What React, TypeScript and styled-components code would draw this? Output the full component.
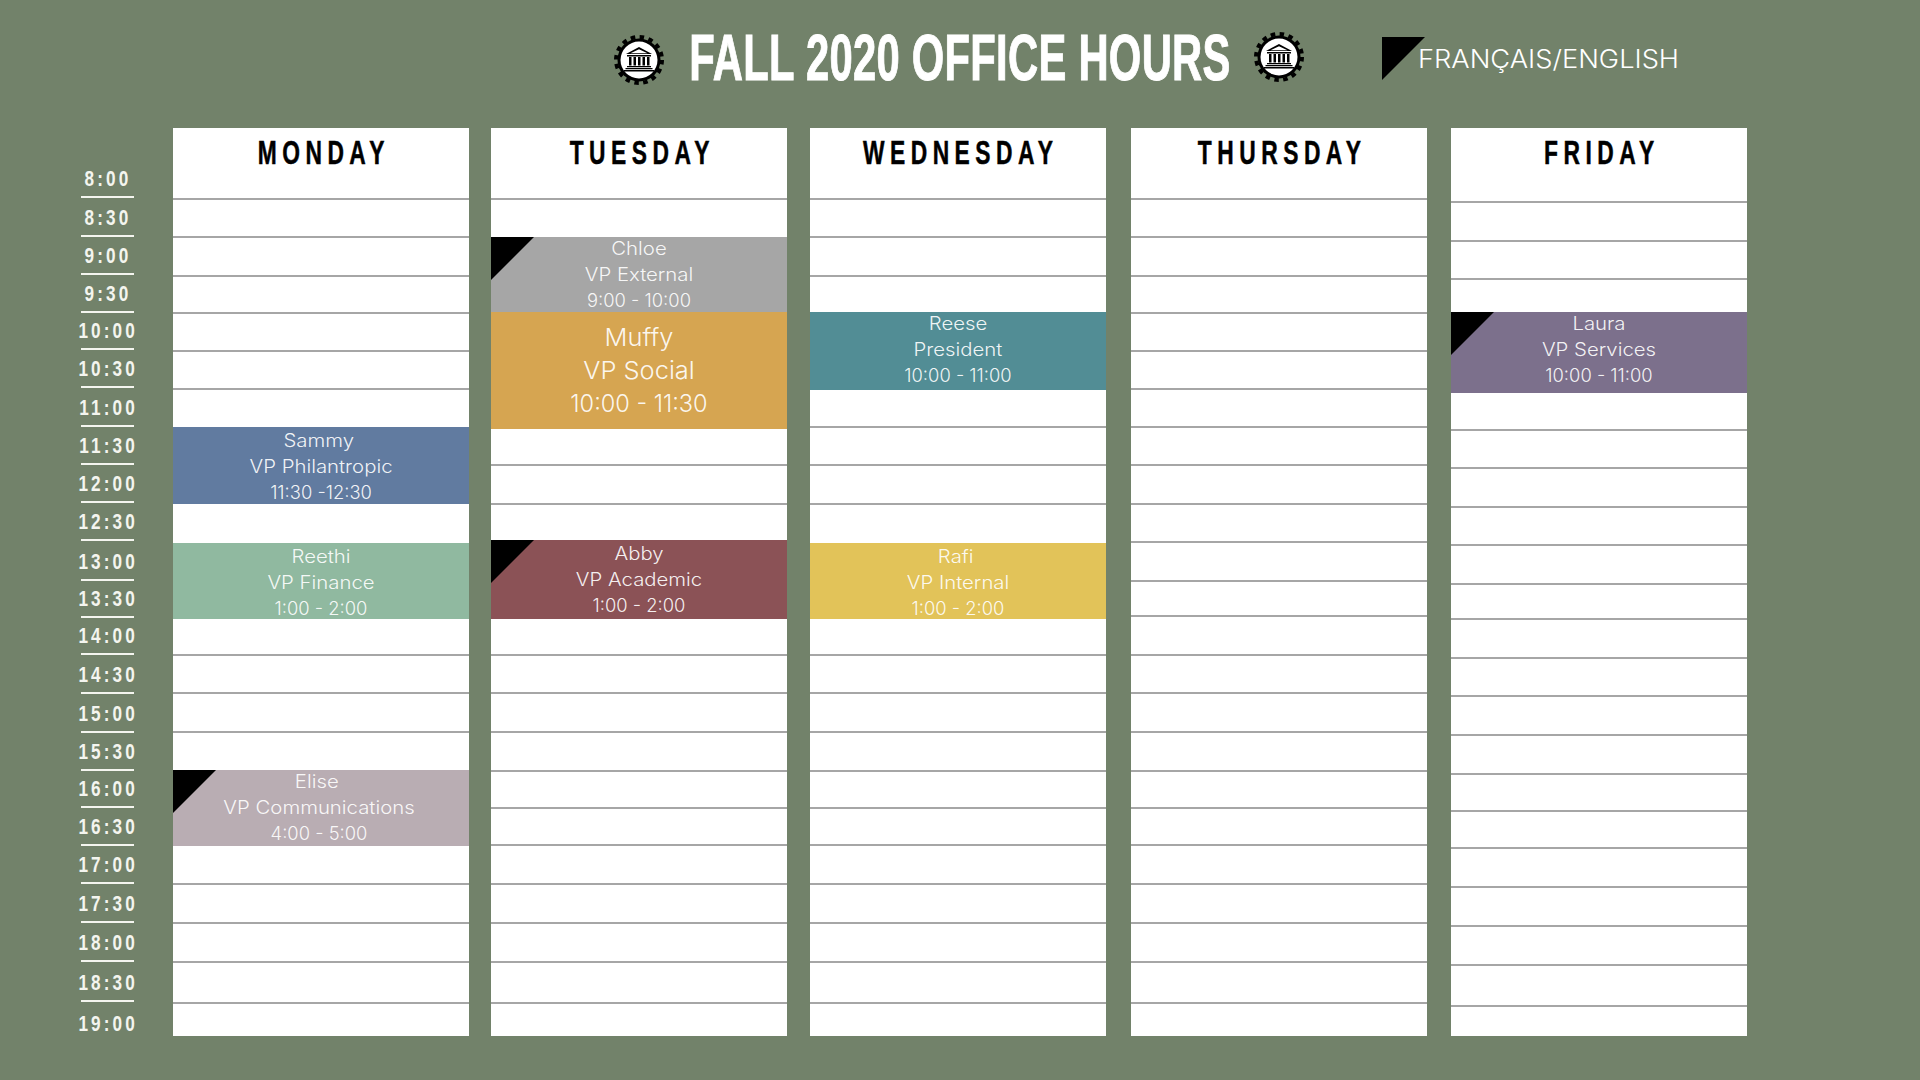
import React from 'react';
import styled, { createGlobalStyle } from 'styled-components';

interface Booking {
  to: number;
  name?: string;
  role?: string;
  time?: string;
  color?: string;
  flag?: boolean;
  big?: boolean;
  dx?: number;
  dy?: number;
  nameDx?: number;
}

type Row = number | Booking;

const GRID_TOP = 128;
const GRID_BOTTOM = 1036;

const afternoon = [656, 694, 733, 772, 809, 846, 885, 924, 963, 1004];

const days: { title: string; gap: number; rows: Row[] }[] = [
  {
    title: 'MONDAY',
    gap: 0,
    rows: [
      200, 238, 277, 314, 352, 390,
      { to: 427 },
      { to: 504, name: 'Sammy', role: 'VP Philantropic', time: '11:30 -12:30', color: '#617ba0', nameDx: -2 },
      { to: 543 },
      { to: 619, name: 'Reethi', role: 'VP Finance', time: '1:00 - 2:00', color: '#90b9a0' },
      656, 694, 733,
      { to: 770 },
      { to: 846, name: 'Elise', role: 'VP Communications', time: '4:00 - 5:00', color: '#b9adb3', flag: true, dx: -2, dy: -2, nameDx: -2 },
      885, 924, 963, 1004,
    ],
  },
  {
    title: 'TUESDAY',
    gap: 22,
    rows: [
      200,
      { to: 237 },
      { to: 312, name: 'Chloe', role: 'VP External', time: '9:00 - 10:00', color: '#a6a6a6', flag: true, dy: -2 },
      { to: 429, name: 'Muffy', role: 'VP Social', time: '10:00 - 11:30', color: '#d6a551', big: true },
      466, 505,
      { to: 540 },
      { to: 619, name: 'Abby', role: 'VP Academic', time: '1:00 - 2:00', color: '#8b5256', flag: true },
      ...afternoon,
    ],
  },
  {
    title: 'WEDNESDAY',
    gap: 23,
    rows: [
      200, 238, 277,
      { to: 312 },
      { to: 390, name: 'Reese', role: 'President', time: '10:00 - 11:00', color: '#528d95', dy: -2 },
      428, 466, 505,
      { to: 543 },
      { to: 619, name: 'Rafi', role: 'VP Internal', time: '1:00 - 2:00', color: '#e2c359', nameDx: -2 },
      ...afternoon,
    ],
  },
  {
    title: 'THURSDAY',
    gap: 25,
    rows: [200, 238, 277, 314, 352, 390, 428, 466, 505, 543, 582, 617, ...afternoon],
  },
  {
    title: 'FRIDAY',
    gap: 24,
    rows: [
      203, 242, 280,
      { to: 312 },
      { to: 393, name: 'Laura', role: 'VP Services', time: '10:00 - 11:00', color: '#7c708c', flag: true, dy: -2 },
      431, 469, 508, 546, 585, 620, 659, 697, 736, 775, 812, 849, 888, 927, 966, 1007,
    ],
  },
];

const hours: [string, number][] = [
  ['8:00', 198], ['8:30', 237], ['9:00', 275], ['9:30', 313], ['10:00', 350], ['10:30', 388],
  ['11:00', 427], ['11:30', 465], ['12:00', 503], ['12:30', 541], ['13:00', 581], ['13:30', 618],
  ['14:00', 655], ['14:30', 694], ['15:00', 733], ['15:30', 771], ['16:00', 808], ['16:30', 846],
  ['17:00', 884], ['17:30', 923], ['18:00', 962], ['18:30', 1002], ['19:00', 1038],
];

const GearLogo = ({ top }: { top: number }) => (
  <LogoSvg $top={top} width={50} height={50} viewBox="0 0 100 100">
    <circle cx="50" cy="50" r="43" fill="#000" />
    <circle cx="50" cy="50" r="46" fill="none" stroke="#000" strokeWidth="8" strokeDasharray="9 9.06" />
    <circle cx="50" cy="50" r="37" fill="#fff" />
    <path d="M50 24 L76 38 H24 Z M50 28.5 L67 36.5 H33 Z" fill="#000" fillRule="evenodd" />
    <rect x="26" y="40" width="48" height="3" fill="#000" />
    <path d="M30 44h5v17h-5z M39 44h5v17h-5z M48 44h5v17h-5z M57 44h5v17h-5z M66 44h5v17h-5z" fill="#000" />
    <rect x="26" y="62" width="48" height="2.5" fill="#000" />
    <rect x="23" y="66" width="54" height="2.5" fill="#000" />
    <rect x="20" y="70" width="60" height="3" fill="#000" />
  </LogoSvg>
);

const App = () => (
  <>
    <GlobalStyle />
    <Page>
      <Header>
        <GearLogo top={2} />
        <Title>
          <Scaled $k={0.643}>FALL 2020 OFFICE HOURS</Scaled>
        </Title>
        <GearLogo top={-1} />
        <Language>
          <Flag />
          <LanguageText>FRANÇAIS/ENGLISH</LanguageText>
        </Language>
      </Header>

      <Main>
        <Hours>
          {hours.map(([label, y], i) => (
            <HourRow key={label} $h={y - (i === 0 ? 160 : hours[i - 1][1])} $last={i === hours.length - 1}>
              <Scaled $k={0.78}>{label}</Scaled>
            </HourRow>
          ))}
        </Hours>

        {days.map(day => {
          let prev = day.rows[0] as number;
          return (
            <Day key={day.title} $gap={day.gap}>
              <DayHead $h={prev - GRID_TOP}>
                <Scaled $k={0.69}>{day.title}</Scaled>
              </DayHead>
              {day.rows.slice(1).map((row, i) => {
                const to = typeof row === 'number' ? row : row.to;
                const h = to - prev;
                prev = to;
                if (typeof row === 'number') return <Slot key={i} $h={h} $ruled />;
                if (!row.name) return <Slot key={i} $h={h} />;
                const wordK = row.big ? 1.06 : 1.13;
                return (
                  <Event key={i} $h={h} $color={row.color || '#fff'} $big={row.big} $dx={row.dx || 0} $dy={row.dy || 0}>
                    {row.flag && <Flag $over />}
                    <EventLine $k={wordK} $dx={row.nameDx || 0}>{row.name}</EventLine>
                    <EventLine $k={wordK}>{row.role}</EventLine>
                    <EventLine $k={row.big ? 0.98 : 1.02}>{row.time}</EventLine>
                  </Event>
                );
              })}
              <Slot $h={GRID_BOTTOM - prev} />
            </Day>
          );
        })}
      </Main>
    </Page>
  </>
);

const GlobalStyle = createGlobalStyle`
  html, body {
    margin: 0;
    padding: 0;
    background: #72826a;
  }
  * {
    box-sizing: border-box;
  }
`;

const Page = styled.div`
  width: 1920px;
  height: 1080px;
  overflow: hidden;
  background: #72826a;
  font-family: 'Inter', 'Liberation Sans', sans-serif;
`;

const Header = styled.header`
  height: 128px;
  padding: 33px 0 0 614px;
  display: flex;
  align-items: flex-start;
`;

const LogoSvg = styled.svg<{ $top: number }>`
  flex: none;
  display: block;
  margin-top: ${p => p.$top}px;
`;

const Title = styled.h1`
  margin: -1px 25px 0 26px;
  width: 539px;
  height: 50px;
  display: flex;
  align-items: center;
  justify-content: center;
  color: #fff;
  font-family: 'Liberation Sans', sans-serif;
  font-size: 65px;
  font-weight: 700;
  letter-spacing: 0.4px;
  -webkit-text-stroke: 1px #fff;
  white-space: nowrap;
`;

const Scaled = styled.span<{ $k: number }>`
  display: inline-block;
  flex: none;
  white-space: nowrap;
  transform: scaleX(${p => p.$k});
  transform-origin: center;
`;

const Language = styled.div`
  margin: 4px 0 0 78px;
  display: flex;
  align-items: center;
`;

const Flag = styled.div<{ $over?: boolean }>`
  flex: none;
  width: 43px;
  height: 43px;
  background: #000;
  clip-path: polygon(0 0, 100% 0, 0 100%);
  ${p => p.$over && 'position: absolute; top: 0; left: 0;'}
`;

const LanguageText = styled.span`
  margin-left: -7px;
  color: #fff;
  font-size: 25px;
  font-weight: 300;
  white-space: nowrap;
  transform: scaleX(1.09);
  transform-origin: left center;
`;

const Main = styled.main`
  display: flex;
  align-items: flex-start;
  padding-left: 81px;
`;

const Hours = styled.div`
  flex: none;
  width: 53px;
  margin: 32px 39px 0 0;
`;

const HourRow = styled.div<{ $h: number; $last: boolean }>`
  height: ${p => p.$h}px;
  padding: 0 0 ${p => (p.$last ? 0 : 3)}px 2px;
  display: flex;
  align-items: flex-end;
  justify-content: center;
  border-bottom: ${p => (p.$last ? 'none' : '2px solid #f4f5ef')};
  color: #f4f5ef;
  font-family: 'Liberation Sans', sans-serif;
  font-size: 22px;
  font-weight: 700;
  line-height: 28px;
  letter-spacing: 4px;
  white-space: nowrap;
`;

const Day = styled.section<{ $gap: number }>`
  flex: none;
  width: 296px;
  margin-left: ${p => p.$gap}px;
  background: #fff;
`;

const DayHead = styled.div<{ $h: number }>`
  height: ${p => p.$h}px;
  padding: 5px 0 0 6px;
  display: flex;
  justify-content: center;
  border-bottom: 2px solid #a6a6a6;
  color: #000;
  font-family: 'Liberation Sans', sans-serif;
  font-size: 33px;
  font-weight: 700;
  -webkit-text-stroke: 0.5px #000;
  line-height: 40px;
  letter-spacing: 8px;
`;

const Slot = styled.div<{ $h: number; $ruled?: boolean }>`
  height: ${p => p.$h}px;
  ${p => p.$ruled && 'border-bottom: 2px solid #a6a6a6;'}
`;

const Event = styled.div<{ $h: number; $color: string; $big?: boolean; $dx: number; $dy: number }>`
  position: relative;
  height: ${p => p.$h}px;
  padding-top: ${p => (p.$big ? 9 : 1)}px;
  padding-right: ${p => Math.max(0, -p.$dx * 2)}px;
  overflow: hidden;
  background: ${p => p.$color};
  color: rgba(255, 255, 255, 0.92);
  font-size: ${p => (p.$big ? 24 : 18)}px;
  font-weight: 300;
  line-height: ${p => (p.$big ? 33 : 26)}px;
  text-align: center;
  & > p:first-of-type {
    margin-top: ${p => p.$dy}px;
  }
`;

const EventLine = styled.p<{ $k: number; $dx?: number }>`
  margin: 0;
  padding-right: ${p => Math.max(0, -(p.$dx || 0) * 2)}px;
  white-space: nowrap;
  transform: scaleX(${p => p.$k});
`;

export default App;
